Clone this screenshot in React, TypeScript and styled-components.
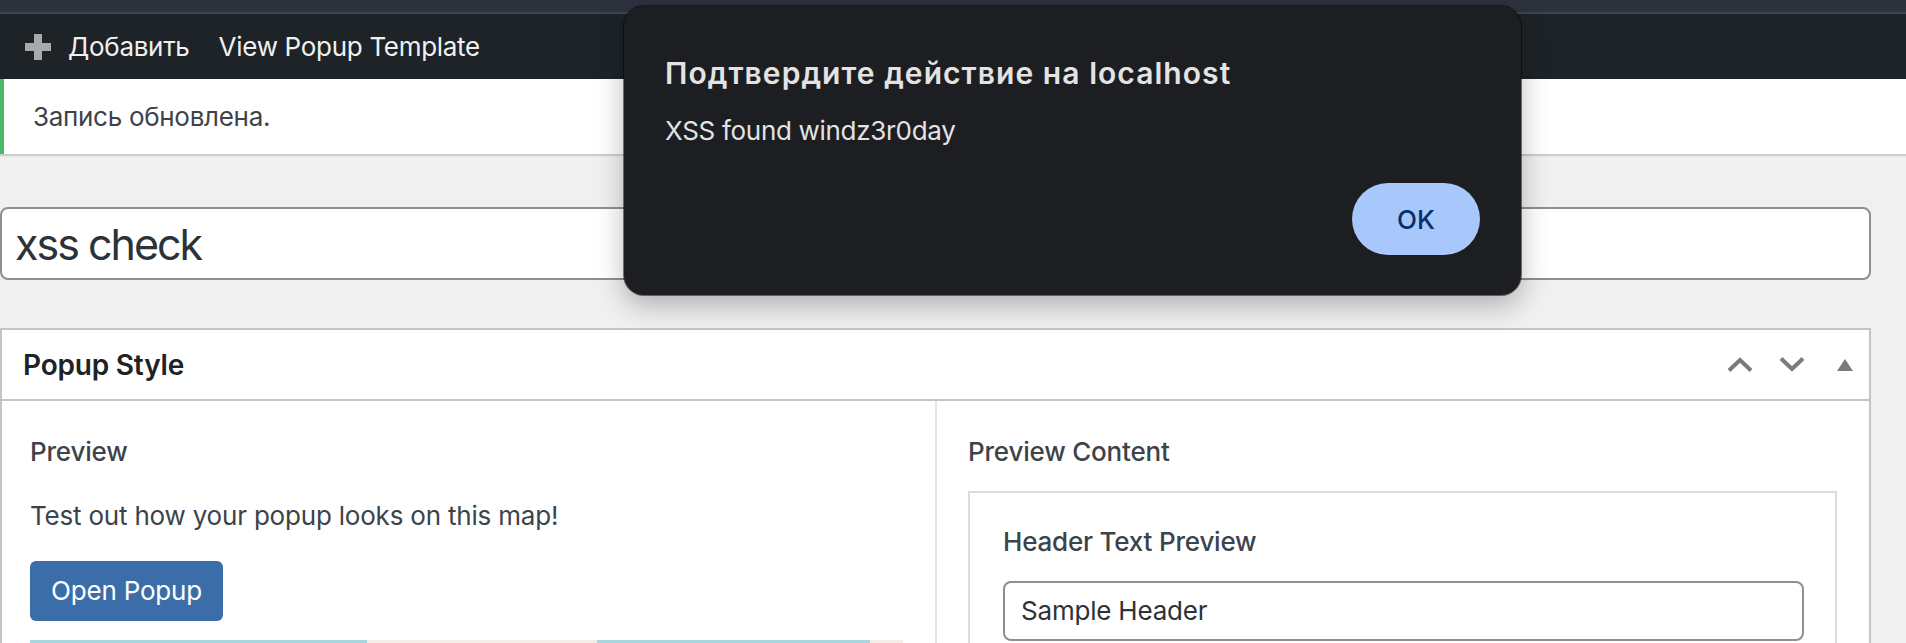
import React from 'react';
import styled, { createGlobalStyle } from 'styled-components';

const GlobalStyle = createGlobalStyle`
  html, body {
    margin: 0;
    padding: 0;
    height: 643px;
    overflow: hidden;
    background: #f0f0f1;
    font-family: Inter, "Noto Sans", "Liberation Sans", sans-serif;
  }
  * {
    box-sizing: border-box;
  }
`;

const Page = styled.div`
  position: relative;
  width: 1906px;
  height: 643px;
  overflow: hidden;
`;

const BrowserEdge = styled.div`
  height: 14px;
  background: #2d323f;
  border-bottom: 2px solid #3d4352;
`;

const AdminBar = styled.nav`
  height: 65px;
  background: #1d2327;
  display: flex;
  align-items: center;
  padding-left: 25px;
  color: #f0f0f1;
  font-size: 26px;
  line-height: 65px;
`;

const BarItem = styled.span<{ $gap?: number }>`
  display: flex;
  align-items: center;
  margin-right: ${(p) => p.$gap ?? 0}px;
  letter-spacing: -0.3px;
`;

const PlusIcon = styled.svg`
  width: 26px;
  height: 26px;
  margin-right: 17px;
`;

const Notice = styled.div`
  height: 75px;
  background: #fff;
  border-left: 4px solid #4ab866;
  box-shadow: 0 2px 1px rgba(0, 0, 0, 0.14);
  padding-left: 29px;
  font-size: 26px;
  line-height: 75px;
  color: #3c434a;
  position: relative;
  letter-spacing: -0.3px;
`;

const Content = styled.main`
  padding-right: 35px;
`;

const TitleInput = styled.div`
  margin-top: 53px;
  height: 73px;
  background: #fff;
  border: 2px solid #8c8f94;
  border-radius: 8px;
  padding: 2px 0 0 13px;
  font-size: 43px;
  line-height: 67px;
  color: #2c3338;
  letter-spacing: -2px;
`;

const Postbox = styled.section`
  margin-top: 48px;
  background: #fff;
  border: 2px solid #c3c4c7;
`;

const PostboxHeader = styled.header`
  height: 71px;
  border-bottom: 2px solid #c3c4c7;
  display: flex;
  align-items: center;
  justify-content: space-between;
  padding: 0 16px 0 21px;
`;

const PostboxTitle = styled.h2`
  margin: 0;
  font-size: 28px;
  font-weight: 600;
  color: #1d2327;
  letter-spacing: -0.2px;
`;

const HeaderActions = styled.div`
  display: flex;
  align-items: center;
  gap: 26px;
`;

const ActionIcon = styled.svg<{ $gapLeft?: number }>`
  display: block;
  margin-left: ${(p) => p.$gapLeft ?? 0}px;
`;

const PostboxBody = styled.div`
  display: grid;
  grid-template-columns: 933px 1fr;
  height: 400px;
`;

const Column = styled.div<{ $divider?: boolean }>`
  padding: 33px 32px 0 ${(p) => (p.$divider ? 31 : 28)}px;
  border-left: ${(p) => (p.$divider ? '2px solid #e4e4e6' : 'none')};
`;

const Label = styled.div`
  font-size: 26px;
  line-height: 36px;
  font-weight: 500;
  color: #3c434a;
  letter-spacing: -0.2px;
`;

const Paragraph = styled.p`
  margin: 28px 0 0;
  font-size: 26px;
  line-height: 36px;
  color: #3c434a;
  letter-spacing: -0.2px;
`;

const PrimaryButton = styled.button`
  margin-top: 27px;
  width: 193px;
  height: 60px;
  border: none;
  border-radius: 6px;
  background: #3b6ea8;
  color: #fff;
  font-family: inherit;
  font-size: 26px;
  line-height: 60px;
  padding: 0;
  letter-spacing: -0.2px;
`;

const MapPreview = styled.div`
  margin-top: 19px;
  height: 200px;
  background: linear-gradient(
    90deg,
    #a9d6de 0%,
    #a9d6de 38.6%,
    #f3ede7 38.6%,
    #f3ede7 65%,
    #a9d6de 65%,
    #a9d6de 96.2%,
    #f3ede7 96.2%
  );
`;

const PreviewFrame = styled.div`
  margin-top: 21px;
  border: 2px solid #dcdcde;
  padding: 31px 31px 0 33px;
  height: 300px;
`;

const FieldInput = styled.div`
  margin-top: 21px;
  height: 60px;
  border: 2px solid #8c8f94;
  border-radius: 8px;
  padding-left: 16px;
  font-size: 26px;
  line-height: 56px;
  color: #2c3338;
  letter-spacing: -0.2px;
`;

const DialogCard = styled.div`
  position: absolute;
  left: 624px;
  top: 6px;
  width: 897px;
  height: 289px;
  background: #1d1e22;
  border-radius: 20px;
  box-shadow: 0 10px 28px rgba(0, 0, 0, 0.28), 0 0 0 1px rgba(0, 0, 0, 0.5);
  padding: 49px 41px 40px 41px;
  display: flex;
  flex-direction: column;
  color: #e3e3e3;
`;

const DialogTitle = styled.div`
  font-size: 30px;
  line-height: 36px;
  font-weight: 600;
  letter-spacing: 1.05px;
`;

const DialogMessage = styled.div`
  margin-top: 22px;
  font-size: 26px;
  line-height: 36px;
  letter-spacing: -0.3px;
`;

const DialogFooter = styled.div`
  margin-top: auto;
  display: flex;
  justify-content: flex-end;
`;

const OkButton = styled.button`
  width: 128px;
  height: 72px;
  border: none;
  border-radius: 36px;
  background: #a8c7fa;
  color: #062e6f;
  font-family: inherit;
  font-size: 26px;
  font-weight: 500;
  padding: 0;
`;

function App() {
  return (
    <>
      <GlobalStyle />
      <Page>
        <BrowserEdge />
        <AdminBar>
          <BarItem $gap={29}>
            <PlusIcon viewBox="0 0 26 26">
              <rect x="9" y="0" width="8" height="26" fill="#a7aaad" />
              <rect x="0" y="9" width="26" height="8" fill="#a7aaad" />
            </PlusIcon>
            Добавить
          </BarItem>
          <BarItem>View Popup Template</BarItem>
        </AdminBar>
        <Notice>Запись обновлена.</Notice>
        <Content>
          <TitleInput>xss check</TitleInput>
          <Postbox>
            <PostboxHeader>
              <PostboxTitle>Popup Style</PostboxTitle>
              <HeaderActions>
                <ActionIcon width="26" height="15" viewBox="0 0 26 15">
                  <path d="M2 13.5 L13 3 L24 13.5" fill="none" stroke="#787c82" strokeWidth="4" />
                </ActionIcon>
                <ActionIcon width="26" height="15" viewBox="0 0 26 15">
                  <path d="M2 1.5 L13 12 L24 1.5" fill="none" stroke="#787c82" strokeWidth="4" />
                </ActionIcon>
                <ActionIcon width="16" height="12" viewBox="0 0 16 12" $gapLeft={6}>
                  <path d="M8 0 L16 12 L0 12 Z" fill="#787c82" />
                </ActionIcon>
              </HeaderActions>
            </PostboxHeader>
            <PostboxBody>
              <Column>
                <Label>Preview</Label>
                <Paragraph>Test out how your popup looks on this map!</Paragraph>
                <PrimaryButton>Open Popup</PrimaryButton>
                <MapPreview />
              </Column>
              <Column $divider>
                <Label>Preview Content</Label>
                <PreviewFrame>
                  <Label>Header Text Preview</Label>
                  <FieldInput>Sample Header</FieldInput>
                </PreviewFrame>
              </Column>
            </PostboxBody>
          </Postbox>
        </Content>
        <DialogCard role="alertdialog">
          <DialogTitle>Подтвердите действие на localhost</DialogTitle>
          <DialogMessage>XSS found windz3r0day</DialogMessage>
          <DialogFooter>
            <OkButton>OK</OkButton>
          </DialogFooter>
        </DialogCard>
      </Page>
    </>
  );
}

export default App;
